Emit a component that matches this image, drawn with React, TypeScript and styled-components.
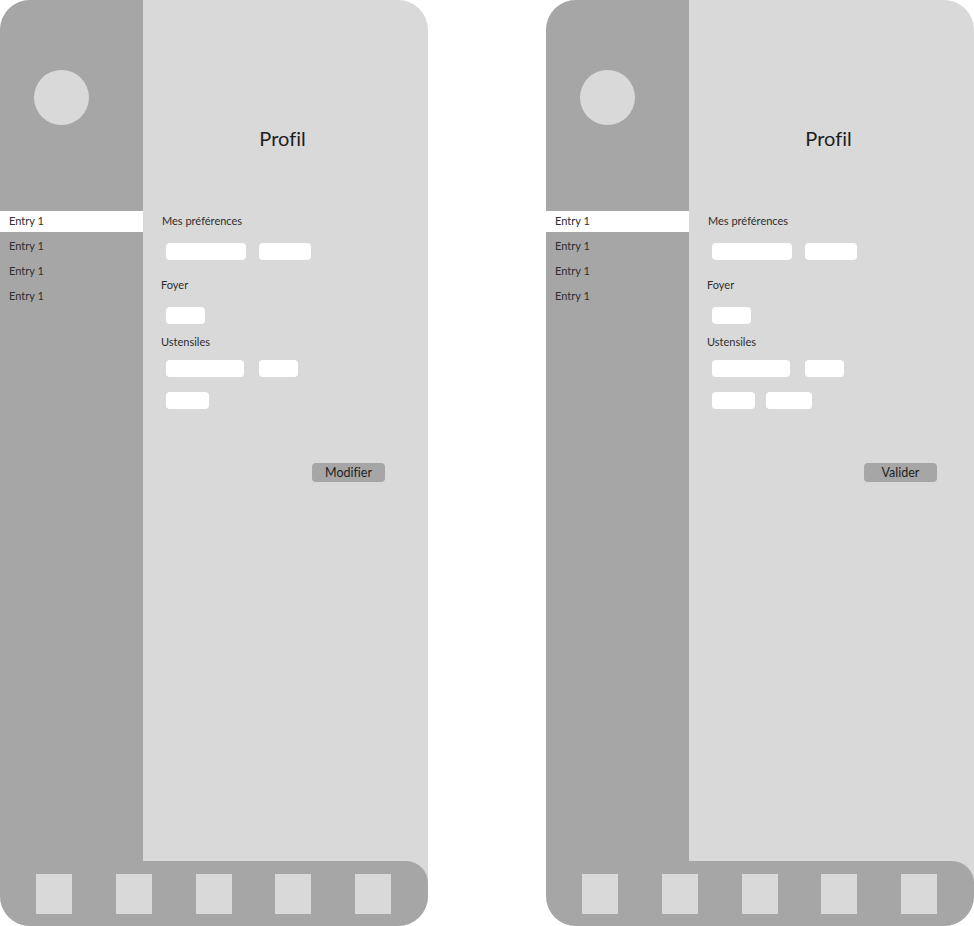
import React from "react";
import styled, { createGlobalStyle } from "styled-components";

const Global = createGlobalStyle`
  html, body { margin: 0; padding: 0; background: #ffffff; }
  body {
    font-family: Lato, "Noto Sans", sans-serif;
    color: #222;
    font-variant-ligatures: none;
    font-feature-settings: "liga" 0, "clig" 0;
  }
  button { font-variant-ligatures: none; font-feature-settings: "liga" 0, "clig" 0; }
`;

const Page = styled.div`
  display: flex;
  gap: 118px;
  width: 974px;
`;

const Phone = styled.div`
  width: 428px;
  height: 926px;
  border-radius: 30px;
  overflow: hidden;
  background: #d9d9d9;
  display: grid;
  grid-template-columns: 143px 1fr;
  grid-template-rows: 861px 65px;
`;

const Sidebar = styled.aside`
  background: #a6a6a6;
  display: flex;
  flex-direction: column;
`;

const Avatar = styled.div`
  width: 55px;
  height: 55px;
  border-radius: 50%;
  background: #d9d9d9;
  margin: 70px 0 0 34px;
`;

const Menu = styled.ul`
  list-style: none;
  margin: 86px 0 0 0;
  padding: 0;
  display: flex;
  flex-direction: column;
  gap: 4px;
`;

const MenuItem = styled.li<{ $active?: boolean }>`
  height: 21px;
  line-height: 20px;
  padding-left: 9px;
  font-size: 11px;
  color: #2e2e2e;
  background: ${(p) => (p.$active ? "#ffffff" : "transparent")};
`;

const Main = styled.main`
  display: flex;
  flex-direction: column;
  padding-left: 18px;
`;

const Title = styled.h1`
  margin: 126px 0 0 -18px;
  height: 24px;
  line-height: 24px;
  font-size: 20px;
  font-weight: 400;
  text-align: center;
  padding-right: 6px;
  color: #1e1e1e;
`;

const Label = styled.div<{ $mt: number; $ml?: number }>`
  margin-top: ${(p) => p.$mt}px;
  margin-left: ${(p) => p.$ml ?? 0}px;
  height: 14px;
  line-height: 14px;
  font-size: 11px;
  color: #2e2e2e;
`;

const ChipRow = styled.div<{ $mt: number; $gap: number }>`
  display: flex;
  gap: ${(p) => p.$gap}px;
  margin-top: ${(p) => p.$mt}px;
  padding-left: 5px;
`;

const Chip = styled.div<{ $w: number }>`
  width: ${(p) => p.$w}px;
  height: 17px;
  border-radius: 4px;
  background: #ffffff;
`;

const ButtonRow = styled.div<{ $mr: number }>`
  display: flex;
  justify-content: flex-end;
  margin-top: 54px;
  margin-right: ${(p) => p.$mr}px;
`;

const ActionButton = styled.button`
  width: 73px;
  height: 19px;
  border: none;
  border-radius: 4px;
  background: #a6a6a6;
  font-family: Lato, "Noto Sans", sans-serif;
  font-size: 12.5px;
  color: #1e1e1e;
  padding: 0;
  line-height: 19px;
`;

const Nav = styled.nav`
  grid-column: 1 / span 2;
  background: #a6a6a6;
  border-top-right-radius: 22px;
  display: flex;
  justify-content: space-between;
  align-items: flex-start;
  padding: 13px 37px 0 36px;
`;

const NavSquare = styled.div`
  width: 36px;
  height: 40px;
  background: #d9d9d9;
`;

type PhoneProps = {
  button: string;
  buttonRight: number;
  extraChips: number[];
};

const ProfileScreen: React.FC<PhoneProps> = ({ button, buttonRight, extraChips }) => (
  <Phone>
    <Sidebar>
      <Avatar />
      <Menu>
        <MenuItem $active>Entry 1</MenuItem>
        <MenuItem>Entry 1</MenuItem>
        <MenuItem>Entry 1</MenuItem>
        <MenuItem>Entry 1</MenuItem>
      </Menu>
    </Sidebar>
    <Main>
      <Title>Profil</Title>
      <Label $mt={64} $ml={1}>Mes préférences</Label>
      <ChipRow $mt={15} $gap={13}>
        <Chip $w={80} />
        <Chip $w={52} />
      </ChipRow>
      <Label $mt={18}>Foyer</Label>
      <ChipRow $mt={15} $gap={13}>
        <Chip $w={39} />
      </ChipRow>
      <Label $mt={11}>Ustensiles</Label>
      <ChipRow $mt={11} $gap={15}>
        <Chip $w={78} />
        <Chip $w={39} />
      </ChipRow>
      <ChipRow $mt={15} $gap={11}>
        {extraChips.map((w, i) => (
          <Chip key={i} $w={w} />
        ))}
      </ChipRow>
      <ButtonRow $mr={buttonRight}>
        <ActionButton>{button}</ActionButton>
      </ButtonRow>
    </Main>
    <Nav>
      <NavSquare />
      <NavSquare />
      <NavSquare />
      <NavSquare />
      <NavSquare />
    </Nav>
  </Phone>
);

export default function App() {
  return (
    <>
      <Global />
      <Page>
        <ProfileScreen button="Modifier" buttonRight={43} extraChips={[43]} />
        <ProfileScreen button="Valider" buttonRight={37} extraChips={[43, 46]} />
      </Page>
    </>
  );
}
